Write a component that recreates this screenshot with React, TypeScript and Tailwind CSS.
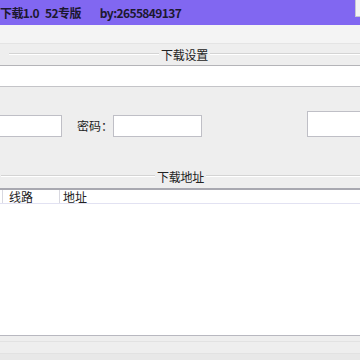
import React from 'react';

const font = { fontFamily: '"Noto Sans CJK SC", "Noto Sans", sans-serif' };

const Legend: React.FC<{ label: string; className: string }> = ({ label, className }) => (
  <div className={`flex items-center ${className}`}>
    <div className="h-[2px] border-t border-[#d4d4d4] border-b border-b-white flex-1" />
    <span className="px-[2px] text-[12px] leading-[13px] tracking-[-0.3px] text-[#222]">{label}</span>
    <div className="h-[2px] border-t border-[#d4d4d4] border-b border-b-white flex-1" />
  </div>
);

const Box: React.FC<{ className: string }> = ({ className }) => (
  <div className={`bg-white border border-[#bfbfc6] shrink-0 ${className}`} />
);

export default function App() {
  return (
    <div className="w-[360px] h-[360px] overflow-hidden flex flex-col bg-[#eeeeee]" style={font}>
      {/* title bar */}
      <div className="h-[25px] shrink-0 bg-[#8167f1] flex items-start">
        <div className="h-[25px] flex items-center text-[12px] font-bold tracking-[-0.6px] text-[#1c1830] whitespace-nowrap">
          <span>下载1.0</span>
          <span className="ml-[6px]">52专版</span>
          <span className="ml-[19px]">by:2655849137</span>
        </div>
        <div className="ml-auto w-[5px] h-[17px] bg-[#f4f4f4] border-l border-b border-[#c8c8d0]" />
      </div>

      <div className="h-[19px] shrink-0 bg-[#f4f4f4] border-b border-[#e4e4e4]" />

      {/* 下载设置 */}
      <div className="h-[21px] shrink-0 flex items-center pb-[1px]">
        <Legend label="下载设置" className="w-full pl-[9px]" />
      </div>
      <div className="h-[22px] shrink-0 bg-white border-t border-[#b4b4b8] border-b border-b-[#c4c4c8]" />

      <div className="shrink-0 pt-[24px] flex items-end overflow-hidden">
        <Box className="ml-[-1px] w-[63px] h-[22px]" />
        <span className="ml-[15px] w-[37px] h-[22px] flex items-center text-[12px] text-[#222] whitespace-nowrap">密码：</span>
        <Box className="w-[89px] h-[22px]" />
        <Box className="ml-[105px] w-[60px] h-[26px]" />
      </div>

      <div className="h-[32px] shrink-0" />
      <div className="h-[14px] shrink-0 flex items-center">
        <Legend label="下载地址" className="w-full pl-[1px]" />
      </div>
      <div className="h-[5px] shrink-0" />

      {/* list */}
      <div className="flex-1 bg-white border-t-2 border-[#a8a8b0] border-b border-b-[#b8b8c0] flex flex-col">
        <div className="h-[14px] shrink-0 flex border-b border-[#e2e2f2] text-[12px] leading-[13px] text-[#222]">
          <div className="w-[3px] border-r border-[#d8d8e0]" />
          <div className="w-[57px] pl-[6px] border-r border-[#d8d8e0]">线路</div>
          <div className="pl-[3px]">地址</div>
        </div>
      </div>

      <div className="h-[6px] shrink-0 border-b border-[#e2e2e2]" />
      <div className="h-[12px] shrink-0 border-b border-[#e2e2e2]" />
      <div className="h-[6px] shrink-0 bg-[#e8e8e8]" />
    </div>
  );
}
